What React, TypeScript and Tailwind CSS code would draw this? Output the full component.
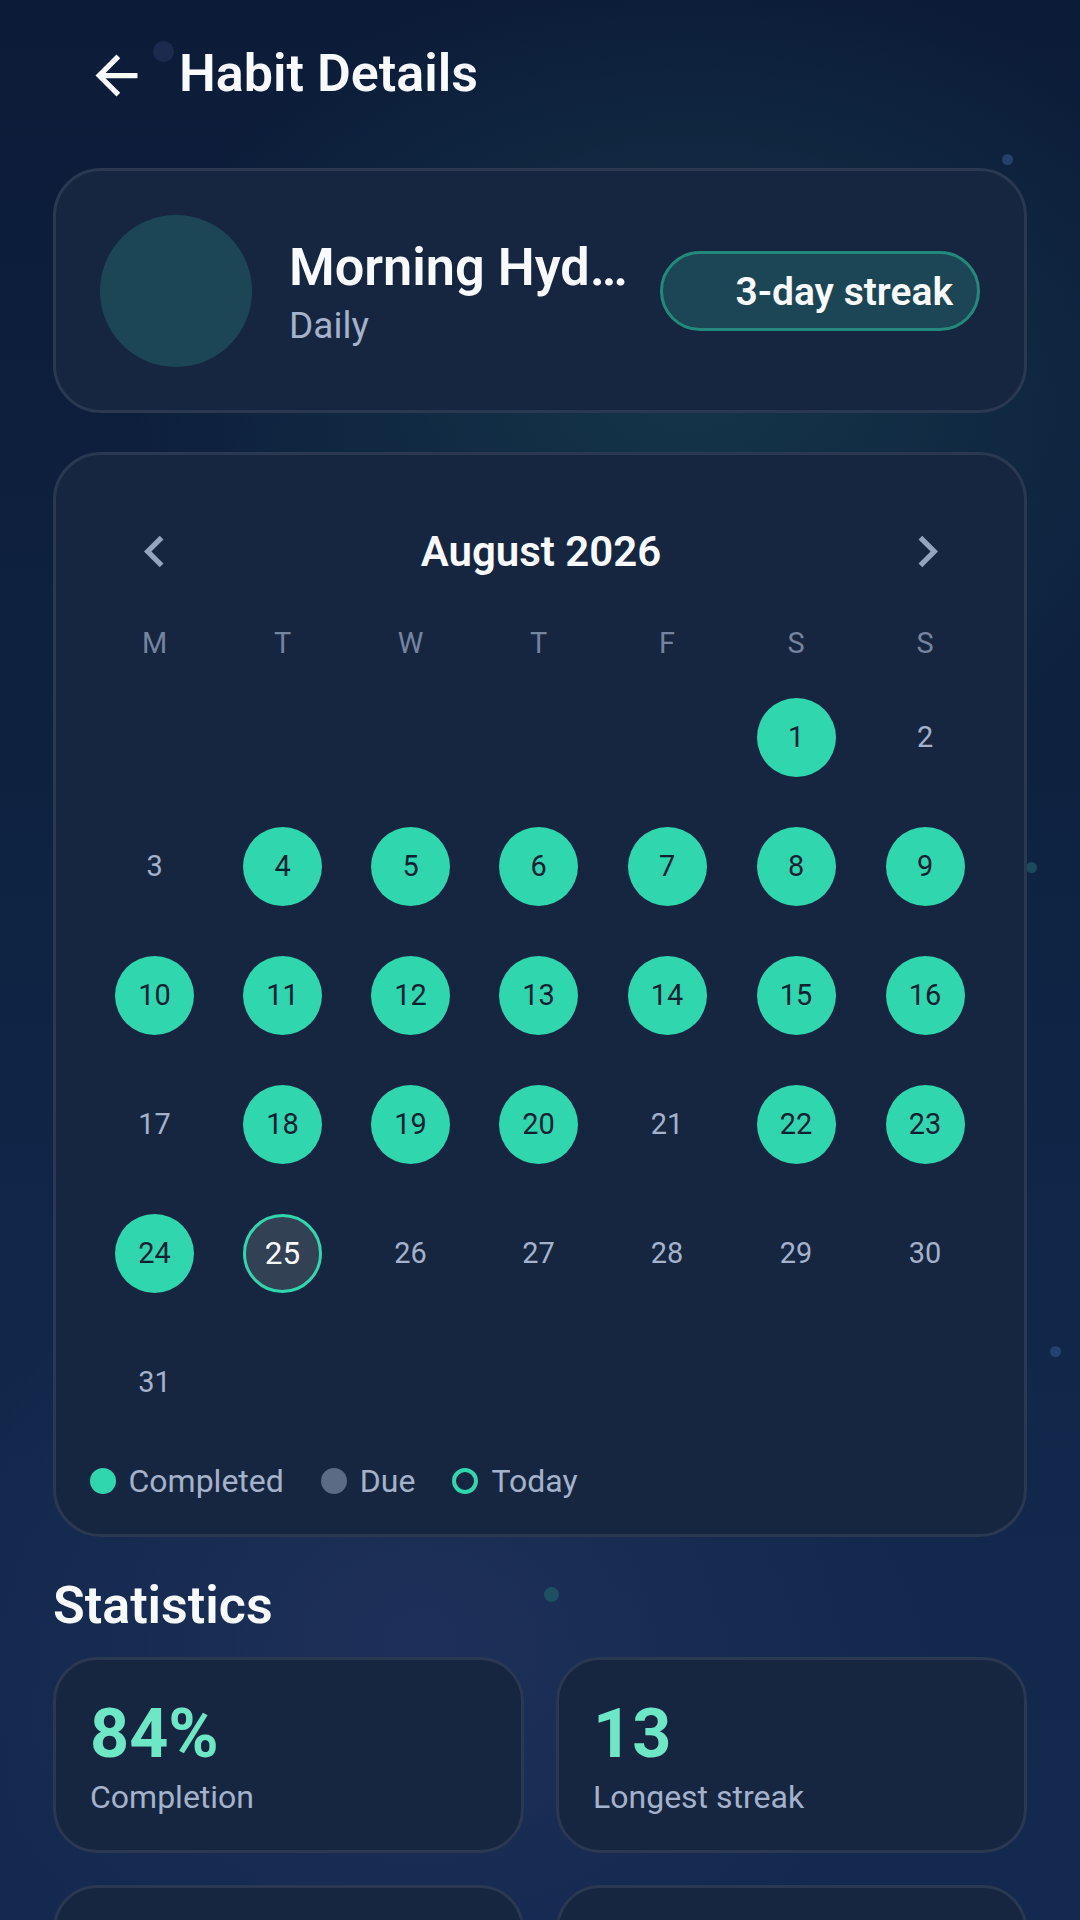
const completed = [1, 4, 5, 6, 7, 8, 9, 10, 11, 12, 13, 14, 15, 16, 18, 19, 20, 22, 23, 24];
const weekdays = ["M", "T", "W", "T", "F", "S", "S"];
const days = Array.from({ length: 31 }, (_, i) => i + 1);

function BackArrow() {
  return (
    <svg width="63" height="63" viewBox="0 0 24 24" fill="#f8fafc">
      <path d="M20 11H7.83l5.59-5.59L12 4l-8 8 8 8 1.41-1.41L7.83 13H20v-2z" />
    </svg>
  );
}

function Chevron({ dir }: { dir: "left" | "right" }) {
  return (
    <svg width="63" height="63" viewBox="0 0 24 24" fill="#94a3be">
      {dir === "left" ? (
        <path d="M15.41 7.41L14 6l-6 6 6 6 1.41-1.41L10.83 12z" />
      ) : (
        <path d="M10 6L8.59 7.41 13.17 12l-4.58 4.59L10 18l6-6z" />
      )}
    </svg>
  );
}

function DayCell({ day }: { day: number }) {
  if (completed.includes(day)) {
    return (
      <div className="flex h-[129px] items-center justify-center">
        <div className="flex size-[79px] items-center justify-center rounded-full bg-[#2fd6ae] text-[28.9px] text-[#0d2030]">
          {day}
        </div>
      </div>
    );
  }
  if (day === 25) {
    return (
      <div className="flex h-[129px] items-center justify-center">
        <div className="flex size-[79px] items-center justify-center rounded-full border-[3px] border-[#2fd6ae] bg-[#334155] text-[31.5px] text-[#f8fafc]">
          {day}
        </div>
      </div>
    );
  }
  return <div className="flex h-[129px] items-center justify-center text-[28.9px] text-[#a4b2cc]">{day}</div>;
}

function StatCard({ value, label }: { value: string; label: string }) {
  return (
    <div className="h-[196px] rounded-[44px] border-[3px] border-[#2a3852] bg-[#172640] px-[34px] pt-[39px]">
      <div className="text-[68.25px] leading-[70px] font-bold text-[#6ee7c7]">{value}</div>
      <div className="mt-[8px] text-[32px] leading-[40px] text-[#a4b2cc]">{label}</div>
    </div>
  );
}

export default function App() {
  return (
    <div className="relative h-[1920px] w-[1080px] overflow-hidden bg-[radial-gradient(ellipse_560px_420px_at_690px_380px,#143549,transparent),radial-gradient(ellipse_520px_420px_at_420px_1640px,#1e3059,transparent),linear-gradient(180deg,#0c1b38_0%,#0e2240_40%,#11274a_70%,#14294f_100%)] font-['Roboto',sans-serif]">
      <span className="absolute top-[41px] left-[153px] size-[21px] rounded-full bg-[#1c2b4d]" />
      <span className="absolute top-[154px] left-[1002px] size-[11px] rounded-full bg-[#25406a]" />
      <span className="absolute top-[862px] left-[1026px] size-[11px] rounded-full bg-[#1b4a5c]" />
      <span className="absolute top-[1346px] left-[1050px] size-[11px] rounded-full bg-[#26406f]" />
      <span className="absolute top-[1587px] left-[544px] size-[15px] rounded-full bg-[#1f4f63]" />

      <div className="relative flex flex-col px-[53px]">
        <header className="flex h-[150px] items-center pl-[32px]">
          <BackArrow />
          <h1 className="mt-[-3px] ml-[31px] text-[52px] font-semibold text-[#f8fafc]">Habit Details</h1>
        </header>

        <section className="mt-[18px] flex h-[245px] items-center rounded-[48px] border-[3px] border-[#2a3852] bg-[#172640] pr-[44px] pl-[44px]">
          <div className="size-[152px] shrink-0 rounded-full bg-[#1c4655]" />
          <div className="ml-[37px] w-[342px] shrink-0 pt-[4px]">
            <div className="truncate text-[52.25px] leading-[60px] font-semibold text-[#f8fafc]">Morning Hydration</div>
            <div className="mt-[6px] text-[37px] leading-[44px] text-[#a4b2cc]">Daily</div>
          </div>
          <div className="ml-auto flex h-[80px] w-[320px] shrink-0 items-center justify-end rounded-full border-[3px] border-[#24897d] bg-[#1c4655] pt-[3px] pr-[24px] text-[39px] font-semibold text-[#f8fafc]">
            3-day streak
          </div>
        </section>

        <section className="mt-[39px] flex h-[1085px] flex-col rounded-[48px] border-[3px] border-[#2a3852] bg-[#172640] px-[34.5px]">
          <div className="flex items-center justify-between pt-[65px] pr-[30px] pl-[32px]">
            <Chevron dir="left" />
            <div className="text-[42px] font-semibold text-[#f8fafc]">August 2026</div>
            <Chevron dir="right" />
          </div>
          <div className="mt-[40px] grid grid-cols-[128px_128px_128px_128px_129px_129px_129px]">
            {weekdays.map((d, i) => (
              <div key={i} className="text-center text-[28.9px] leading-[40px] text-[#75849f]">
                {d}
              </div>
            ))}
          </div>
          <div className="mt-[10px] grid grid-cols-[128px_128px_128px_128px_129px_129px_129px]">
            <div className="col-span-5" />
            {days.map((d) => (
              <DayCell key={d} day={d} />
            ))}
          </div>
          <div className="mt-[15px] ml-[-1px] flex items-center text-[32px] leading-[38px] text-[#a4b2cc]">
            <span className="size-[26px] rounded-full bg-[#2fd6ae]" />
            <span className="ml-[13px]">Completed</span>
            <span className="ml-[37px] size-[26px] rounded-full bg-[#5b6b85]" />
            <span className="ml-[13px]">Due</span>
            <span className="ml-[37px] size-[26px] rounded-full border-[4px] border-[#2fd6ae]" />
            <span className="ml-[13px]">Today</span>
          </div>
        </section>

        <h2 className="mt-[39px] text-[52px] leading-[60px] font-semibold text-[#f8fafc]">Statistics</h2>

        <div className="mt-[21px] grid grid-cols-2 gap-x-[32px] gap-y-[32px]">
          <StatCard value="84%" label="Completion" />
          <StatCard value="13" label="Longest streak" />
          <div className="h-[196px] rounded-[44px] border-[3px] border-[#2a3852] bg-[#172640]" />
          <div className="h-[196px] rounded-[44px] border-[3px] border-[#2a3852] bg-[#172640]" />
        </div>
      </div>
    </div>
  );
}
